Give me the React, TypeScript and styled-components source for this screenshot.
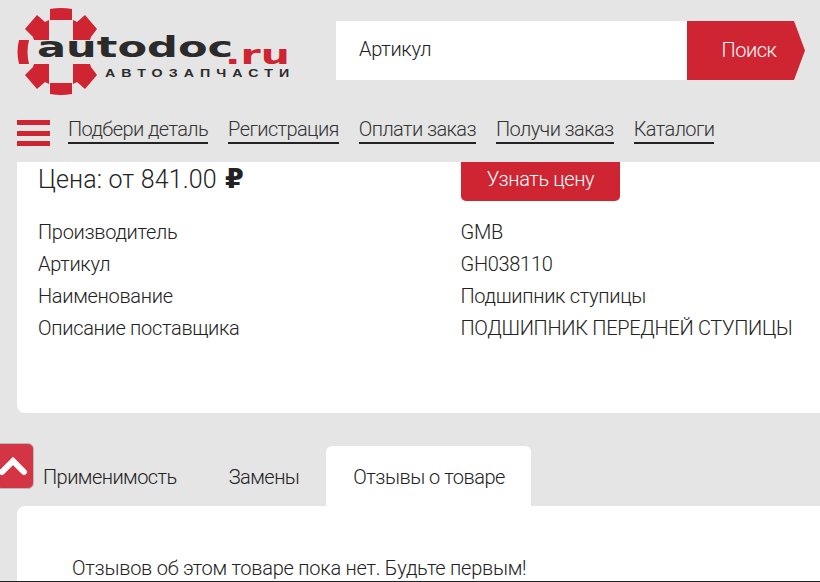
import React from 'react'
import styled, { createGlobalStyle } from 'styled-components'

const GlobalStyle = createGlobalStyle`
    html, body {
        margin: 0;
        padding: 0;
        height: 582px;
        overflow: hidden;
        background: #e5e5e5;
    }
    * {
        box-sizing: border-box;
    }
`

const Page = styled.div`
    position: relative;
    width: 820px;
    height: 582px;
    overflow: hidden;
    background: #e5e5e5;
    font-family: Roboto, 'Liberation Sans', sans-serif;
    font-weight: 300;
    color: #222222;
    border-bottom: 1px solid #222222;
`

const Header = styled.header`
    height: 162px;
    padding: 8px 15px 0 16px;
`

const TopRow = styled.div`
    display: flex;
    align-items: flex-start;
`

const Logo = styled.div`
    position: relative;
    width: 320px;
    height: 90px;
    flex-shrink: 0;
`

const LogoName = styled.span`
    position: absolute;
    left: 21px;
    top: 24px;
    font-family: 'DejaVu Sans', sans-serif;
    font-weight: 700;
    font-size: 28px;
    line-height: 32px;
    color: #2b2b2b;
    transform: scaleX(1.54);
    transform-origin: left top;
`

const LogoRu = styled.span`
    position: absolute;
    left: 209px;
    top: 32px;
    font-family: 'DejaVu Sans', sans-serif;
    font-weight: 700;
    font-size: 26px;
    line-height: 30px;
    color: #cf2431;
    transform: scaleX(1.57);
    transform-origin: left top;
`

const LogoSub = styled.span`
    position: absolute;
    left: 89px;
    top: 58px;
    font-family: 'Liberation Sans', sans-serif;
    font-weight: 700;
    font-size: 10px;
    line-height: 16px;
    letter-spacing: 4.3px;
    color: #2b2b2b;
    white-space: nowrap;
    transform: scaleX(1.42);
    transform-origin: left top;
`

const GearSvg = styled.svg`
    position: absolute;
    left: 0;
    top: 0;
`

const Search = styled.div`
    display: flex;
    margin-top: 13px;
    height: 59px;
`

const SearchField = styled.div`
    width: 351px;
    padding-left: 23px;
    background: #ffffff;
    font-size: 20px;
    line-height: 57px;
    letter-spacing: -0.3px;
`

const SearchButton = styled.button`
    width: 118px;
    border: 0;
    padding: 0 0 2px 6px;
    background: #cf2431;
    color: #ffffff;
    font: inherit;
    font-size: 20px;
    letter-spacing: -0.5px;
    clip-path: polygon(0 0, 107px 0, 100% 50%, 107px 100%, 0 100%);
`

const Nav = styled.nav`
    display: flex;
    align-items: flex-start;
    margin-top: 13px;
`

const Burger = styled.div`
    display: flex;
    flex-direction: column;
    gap: 5.5px;
    width: 33px;
    margin: 9px 18px 0 1px;
`

const BurgerBar = styled.span`
    height: 5px;
    background: #cf2431;
`

const NavLinks = styled.div`
    display: flex;
    gap: 20px;
`

const NavLink = styled.a`
    font-size: 20px;
    line-height: 24px;
    letter-spacing: -0.6px;
    padding-top: 6px;
    padding-bottom: 1px;
    border-bottom: 2px solid #222222;
    color: #333333;
`

const Card = styled.section`
    margin-left: 17px;
    height: 251px;
    padding-left: 21px;
    background: #ffffff;
    border-radius: 0 0 0 8px;
`

const PriceRow = styled.div`
    display: grid;
    grid-template-columns: 423px 1fr;
    height: 39px;
`

const Price = styled.div`
    font-size: 25px;
    line-height: 34px;
    letter-spacing: 0.15px;
`

const RubleSign = styled.span`
    margin-left: 2px;
    font-family: 'DejaVu Sans', sans-serif;
    font-weight: 700;
    font-size: 27px;
`

const CtaButton = styled.button`
    width: 159px;
    height: 39px;
    border: 0;
    border-radius: 0 0 5px 5px;
    padding: 0 0 6px;
    background: #cf2431;
    color: #ffffff;
    font: inherit;
    font-size: 20px;
    letter-spacing: -0.4px;
`

const Specs = styled.dl`
    display: grid;
    grid-template-columns: 422.5px 1fr;
    margin: 15px 0 0;
    font-size: 20px;
    line-height: 32px;
    letter-spacing: -0.3px;
`

const SpecName = styled.dt`
    margin: 0;
`

const SpecValue = styled.dd`
    margin: 0;
`

const Tabs = styled.div`
    display: flex;
    margin: 33px 0 0 17px;
    height: 60px;
`

const Tab = styled.div<{ $active?: boolean }>`
    margin-left: ${p => (p.$active ? '1px' : '0')};
    padding: 0 26px 0 ${p => (p.$active ? '27px' : '26px')};
    font-size: 20px;
    line-height: 62px;
    letter-spacing: ${p => (p.$active ? '-0.5px' : '-0.55px')};
    border-radius: 6px 6px 0 0;
    background: ${p => (p.$active ? '#ffffff' : 'transparent')};
`

const Panel = styled.section`
    margin-left: 17px;
    height: 76px;
    padding: 46px 0 0 55px;
    background: #ffffff;
    border-radius: 8px 0 0 0;
    font-size: 20px;
    line-height: 32px;
    letter-spacing: -0.25px;
`

const ScrollTop = styled.div`
    position: absolute;
    left: -5px;
    top: 443px;
    display: flex;
    align-items: center;
    justify-content: center;
    width: 39px;
    height: 46px;
    padding-right: 4px;
    background: #d43545;
    border: 1px solid #b9b9b9;
    border-radius: 6px;
`

const specs = [
    ['Производитель', 'GMB'],
    ['Артикул', 'GH038110'],
    ['Наименование', 'Подшипник ступицы'],
    ['Описание поставщика', 'ПОДШИПНИК ПЕРЕДНЕЙ СТУПИЦЫ'],
]

const navItems = ['Подбери деталь', 'Регистрация', 'Оплати заказ', 'Получи заказ', 'Каталоги']

// coordinates are page pixels, the viewBox starts where the logo box starts
const LogoGear = () => (
    <GearSvg width="90" height="90" viewBox="16 8 90 90">
        <g fill="#cf2431">
            <path d="M50 9 Q61 7 72 9 L72 20 L50 20 Z" />
            <path d="M50 83 L72 83 L72 94 Q61 96 50 94 Z" />
            <path d="M19 40 L29 40 Q26 52 29 64 L19 64 Q16 52 19 40 Z" />
            <path d="M25 29 L37 15 L45 22 L49 20 L49 40 L34 40 L33 37 Z" />
            <path d="M97 29 L85 15 L77 22 L73 20 L73 40 L90 40 L91 37 Z" />
            <path d="M25 75 L37 89 L45 82 L49 84 L49 64 L34 64 L33 67 Z" />
            <path d="M97 75 L85 89 L77 82 L73 84 L73 64 L90 64 L91 67 Z" />
        </g>
    </GearSvg>
)

const App = () => (
    <Page>
        <GlobalStyle />
        <Header>
            <TopRow>
                <Logo>
                    <LogoGear />
                    <LogoName>autodoc</LogoName>
                    <LogoRu>.ru</LogoRu>
                    <LogoSub>АВТОЗАПЧАСТИ</LogoSub>
                </Logo>
                <Search>
                    <SearchField>Артикул</SearchField>
                    <SearchButton>Поиск</SearchButton>
                </Search>
            </TopRow>
            <Nav>
                <Burger>
                    <BurgerBar />
                    <BurgerBar />
                    <BurgerBar />
                </Burger>
                <NavLinks>
                    {navItems.map(item => (
                        <NavLink key={item}>{item}</NavLink>
                    ))}
                </NavLinks>
            </Nav>
        </Header>
        <Card>
            <PriceRow>
                <Price>
                    Цена: от 841.00 <RubleSign>₽</RubleSign>
                </Price>
                <CtaButton>Узнать цену</CtaButton>
            </PriceRow>
            <Specs>
                {specs.map(([name, value]) => (
                    <React.Fragment key={name}>
                        <SpecName>{name}</SpecName>
                        <SpecValue>{value}</SpecValue>
                    </React.Fragment>
                ))}
            </Specs>
        </Card>
        <Tabs>
            <Tab>Применимость</Tab>
            <Tab>Замены</Tab>
            <Tab $active>Отзывы о товаре</Tab>
        </Tabs>
        <Panel>Отзывов об этом товаре пока нет. Будьте первым!</Panel>
        <ScrollTop>
            <svg width="32" height="22" viewBox="0 0 32 22" fill="none" stroke="#ffffff" strokeWidth="6" strokeLinecap="round">
                <path d="M5 17 L16 6 L27 17" />
            </svg>
        </ScrollTop>
    </Page>
)

export default App
